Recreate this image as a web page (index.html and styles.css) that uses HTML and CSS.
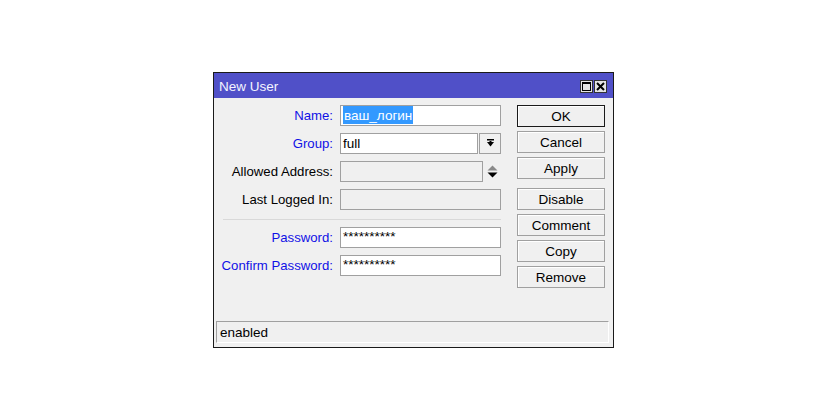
FILE: index.html
```html
<!DOCTYPE html>
<html>
<head>
<meta charset="utf-8">
<link rel="stylesheet" href="styles.css">
</head>
<body>
<div class="window">
  <div class="titlebar">
    <span class="title">New User</span>
    <div class="tbtns">
      <span class="tbtn"><svg width="11" height="11" viewBox="0 0 11 11"><rect x="1.5" y="1.5" width="8" height="8" fill="none" stroke="#000" stroke-width="1"/><rect x="1" y="1" width="9" height="2" fill="#000"/></svg></span>
      <span class="tbtn"><svg width="11" height="11" viewBox="0 0 11 11"><path d="M2 2 L9 9 M9 2 L2 9" stroke="#000" stroke-width="2"/></svg></span>
    </div>
  </div>
  <div class="content">
    <div class="form">
      <div class="row">
        <label class="lbl blue">Name:</label>
        <div class="field"><span class="sel">ваш_логин</span></div>
      </div>
      <div class="row">
        <label class="lbl blue">Group:</label>
        <div class="field short">full</div>
        <div class="ddbtn"><svg width="9" height="9" viewBox="0 0 9 9"><rect x="1" y="0" width="7" height="1.5" fill="#000"/><path d="M1 3 H8 L4.5 7.5 Z" fill="#000"/><rect x="3.5" y="2" width="2" height="2" fill="#000"/></svg></div>
      </div>
      <div class="row">
        <label class="lbl">Allowed Address:</label>
        <div class="field disabled mid"></div>
        <div class="spin"><svg width="11" height="14" viewBox="0 0 11 14"><path d="M0.5 5.5 L5.5 0.5 L10.5 5.5 Z" fill="#8a8a8a"/><path d="M0.5 7.5 H10.5 L5.5 12.5 Z" fill="#000"/></svg></div>
      </div>
      <div class="row">
        <label class="lbl">Last Logged In:</label>
        <div class="field disabled"></div>
      </div>
      <div class="sep"></div>
      <div class="row">
        <label class="lbl blue">Password:</label>
        <div class="field pw">**********</div>
      </div>
      <div class="row">
        <label class="lbl blue">Confirm Password:</label>
        <div class="field pw">**********</div>
      </div>
    </div>
    <div class="buttons">
      <div class="btn default">OK</div>
      <div class="btn">Cancel</div>
      <div class="btn">Apply</div>
      <div class="btn gap">Disable</div>
      <div class="btn">Comment</div>
      <div class="btn">Copy</div>
      <div class="btn">Remove</div>
    </div>
  </div>
  <div class="status">enabled</div>
</div>
</body>
</html>
```

FILE: styles.css
```css
html, body {
  margin: 0;
  padding: 0;
  background: #ffffff;
}
body {
  font-family: "Liberation Sans", Arial, sans-serif;
  font-size: 13.5px;
  color: #000;
}
.window {
  margin-left: 213px;
  margin-top: 72px;
  width: 399px;
  height: 274px;
  border: 1px solid #1a1a1a;
  background: #f0f0f0;
  display: flex;
  flex-direction: column;
}
.titlebar {
  height: 25px;
  background: #5050c8;
  display: flex;
  align-items: center;
  justify-content: space-between;
  padding: 0 6px 0 5px;
  flex: none;
}
.title {
  color: #f4f4ff;
  line-height: 25px;
  padding-top: 2px;
}
.tbtns {
  display: flex;
  gap: 1px;
  margin-top: 2px;
}
.tbtn {
  width: 13px;
  height: 13px;
  box-sizing: border-box;
  border: 1px solid #333;
  background: #e4e4e4;
  display: flex;
  align-items: center;
  justify-content: center;
}
.tbtn svg { display: block; }
.content {
  flex: 1;
  display: flex;
  padding-top: 7px;
}
.form {
  width: 287px;
  display: flex;
  flex-direction: column;
  gap: 7px;
}
.row {
  display: flex;
  align-items: center;
  height: 21px;
}
.lbl {
  width: 119px;
  text-align: right;
  margin-right: 7px;
  white-space: nowrap;
  flex: none;
  font-size: 13.2px;
  line-height: 22px;
  padding-top: 1px;
}
.blue { color: #1010e6; }
.field {
  width: 161px;
  height: 21px;
  box-sizing: border-box;
  border: 1px solid #a0a0a0;
  background: #ffffff;
  padding-left: 2px;
  line-height: 20px;
  flex: none;
  white-space: nowrap;
}
.field.short { width: 138px; }
.field.mid { width: 143px; }
.field.disabled { background: #f0f0f0; }
.field.pw { line-height: 17px; }
.sel {
  background: #3399ff;
  color: #ffffff;
  padding: 1px 1px 0;
  display: inline-block;
  line-height: 17px;
}
.ddbtn {
  width: 22px;
  height: 21px;
  box-sizing: border-box;
  margin-left: 1px;
  border: 1px solid #a0a0a0;
  background: #f0f0f0;
  display: flex;
  align-items: center;
  justify-content: center;
}
.ddbtn svg { display: block; }
.spin {
  width: 18px;
  height: 21px;
  display: flex;
  align-items: center;
  justify-content: center;
  padding-top: 1px;
  box-sizing: border-box;
}
.spin svg { display: block; }
.sep {
  height: 1px;
  background: #d9d9d9;
  margin: 2px 0 0 9px;
}
.buttons {
  margin-left: 16px;
  width: 88px;
  display: flex;
  flex-direction: column;
  gap: 4px;
}
.btn {
  height: 22px;
  box-sizing: border-box;
  border: 1px solid #a0a0a0;
  background: #f0f0f0;
  box-shadow: inset 1px 1px 0 #ffffff;
  text-align: center;
  line-height: 21px;
}
.btn.default {
  border-color: #1a1a1a;
}
.btn.gap { margin-top: 5px; }
.status {
  flex: none;
  height: 22px;
  box-sizing: border-box;
  margin: 0 4px 4px 2px;
  border-top: 1px solid #a0a0a0;
  border-left: 1px solid #a0a0a0;
  border-right: 1px solid #ffffff;
  border-bottom: 1px solid #ffffff;
  padding-left: 3px;
  line-height: 21px;
}
```
